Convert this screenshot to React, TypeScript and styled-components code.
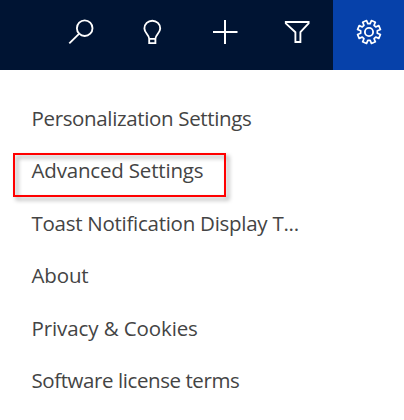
import React from "react";
import styled, { createGlobalStyle } from "styled-components";

const GlobalStyle = createGlobalStyle`
  html, body { margin: 0; padding: 0; background: #ffffff; }
  body { overflow: hidden; }
`;

const Page = styled.div`
  width: 404px;
  height: 420px;
  overflow: hidden;
  background: #ffffff;
  font-family: "Open Sans", "Noto Sans", sans-serif;
`;

const Toolbar = styled.header`
  display: flex;
  justify-content: flex-end;
  height: 70px;
  margin-right: -1px;
  background: #001433;
`;

const ToolButton = styled.button<{ $active?: boolean }>`
  display: flex;
  align-items: center;
  justify-content: center;
  width: 72px;
  height: 70px;
  padding: 0 0 6px;
  border: 0;
  background: ${(p) => (p.$active ? "#0641aa" : "transparent")};
`;

const Icon = styled.svg.attrs({ width: 32, height: 32, viewBox: "0 0 32 32" })`
  display: block;
  fill: none;
  stroke: #ffffff;
  stroke-width: 1.85;
`;

const Menu = styled.ul`
  display: flex;
  flex-direction: column;
  margin: 0;
  padding: 21.9px 0 0 31.5px;
  list-style: none;
`;

const MenuItem = styled.li`
  position: relative;
  display: flex;
  align-items: center;
  height: 52.4px;
`;

const Label = styled.span<{ $spacing: number }>`
  font-size: 20.5px;
  line-height: 28px;
  font-weight: 400;
  color: #444444;
  white-space: pre;
  letter-spacing: ${(p) => p.$spacing}px;
`;

const Highlight = styled.span`
  position: absolute;
  left: -18.5px;
  top: 8.7px;
  width: 213px;
  height: 44px;
  box-sizing: border-box;
  border: 2px solid #ff0000;
  filter: drop-shadow(3px 3px 2px rgba(0, 0, 0, 0.38));
`;

const gearPath = (() => {
  const points: string[] = [];
  const at = (r: number, deg: number) => {
    const a = (deg * Math.PI) / 180;
    points.push(`${(16 + r * Math.cos(a)).toFixed(2)} ${(16 + r * Math.sin(a)).toFixed(2)}`);
  };
  for (let i = 0; i < 8; i++) {
    const c = 22.5 + i * 45;
    at(8.4, c - 14.5);
    at(11.7, c - 10.5);
    at(11.7, c + 10.5);
    at(8.4, c + 14.5);
  }
  return `M${points.join("L")}Z`;
})();

const tools = [
  {
    name: "Search",
    drawing: (
      <>
        <circle cx="19.7" cy="12.2" r="7.8" />
        <path d="M14 17.9L4.3 27.4" />
      </>
    ),
  },
  {
    name: "Assistant",
    drawing: (
      <path d="M12.2 22.8C12.2 18.8 7.4 17 7.4 12.4A7.9 7.7 0 0 1 23.2 12.4C23.2 17 18.4 18.8 18.4 22.8V27.1H12.2V22.8H18.4" />
    ),
  },
  { name: "New", drawing: <path d="M4 16H28.5M16 4V28" strokeWidth="2" /> },
  {
    name: "Filter",
    drawing: <path d="M4.8 6H27.6V7.4L19.4 16.2V26H14.4V16.2L4.8 7.4Z" />,
  },
  {
    name: "Settings",
    active: true,
    drawing: (
      <>
        <path d={gearPath} strokeLinejoin="round" strokeWidth="1.7" />
        <circle cx="16" cy="16" r="4.1" />
      </>
    ),
  },
];

const entries = [
  { text: "Personalization Settings", spacing: -0.35 },
  { text: "Advanced Settings", spacing: -0.18, highlighted: true },
  { text: "Toast Notification Display T...", spacing: -0.27 },
  { text: "About", spacing: -0.15 },
  { text: "Privacy & Cookies", spacing: -0.1 },
  { text: "Software license terms", spacing: -0.42 },
];

export default function App() {
  return (
    <Page>
      <GlobalStyle />
      <Toolbar>
        {tools.map((t) => (
          <ToolButton key={t.name} aria-label={t.name} $active={t.active}>
            <Icon>{t.drawing}</Icon>
          </ToolButton>
        ))}
      </Toolbar>
      <Menu>
        {entries.map((e) => (
          <MenuItem key={e.text}>
            <Label $spacing={e.spacing}>{e.text}</Label>
            {e.highlighted && <Highlight />}
          </MenuItem>
        ))}
      </Menu>
    </Page>
  );
}
